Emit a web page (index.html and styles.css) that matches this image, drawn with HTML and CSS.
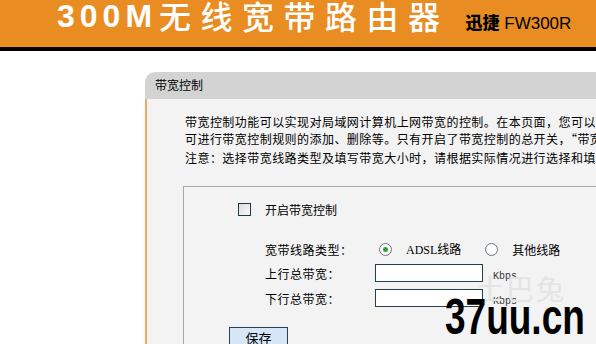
FILE: index.html
```html
<!DOCTYPE html>
<html lang="zh-CN">
<head>
    <meta charset="UTF-8">
    <title>带宽控制</title>
    <link rel="stylesheet" href="styles.css">
</head>
<body>
    <div class="banner">
        <h1 class="product"><span class="num">300M</span><span class="cn">无线宽带路由器</span></h1>
        <div class="model"><b>迅捷</b> FW300R</div>
    </div>

    <div class="main">
        <div class="panel">
            <div class="panel-title">带宽控制</div>
            <div class="panel-body">
                <div class="intro">
                    <p>带宽控制功能可以实现对局域网计算机上网带宽的控制。在本页面，您可以开启或关闭带宽控制功能，</p>
                    <p>可进行带宽控制规则的添加、删除等。只有开启了带宽控制的总开关，“带宽控制规则”才能生效。</p>
                    <p class="note">注意：选择带宽线路类型及填写带宽大小时，请根据实际情况进行选择和填写。</p>
                </div>

                <div class="settings">
                    <div class="switch-row">
                        <span class="check"></span>
                        <span>开启带宽控制</span>
                    </div>
                    <div class="form">
                        <span class="label">宽带线路类型：</span>
                        <div class="radios">
                            <span class="radio on"></span><span class="opt"><span class="latin">ADSL</span>线路</span>
                            <span class="radio"></span><span class="opt">其他线路</span>
                        </div>
                        <span class="label">上行总带宽：</span>
                        <div class="field"><span class="input"></span><span class="unit">Kbps</span></div>
                        <span class="label">下行总带宽：</span>
                        <div class="field"><span class="input"></span><span class="unit">Kbps</span></div>
                    </div>
                    <button class="save">保存</button>
                </div>
            </div>
        </div>
    </div>

    <div class="mark">
        <span class="mark-faint">土巴兔</span>
        <span class="mark-site">37uu.cn</span>
    </div>
</body>
</html>
```

FILE: styles.css
```css
body {
    margin: 0;
    width: 596px;
    height: 344px;
    overflow: hidden;
    background: #fff;
    font-family: "Noto Sans CJK SC", sans-serif;
    font-size: 12px;
    color: #000;
    position: relative;
}
.banner {
    height: 47px;
    background: #e98c22;
    border-bottom: 4px solid #000;
    display: flex;
    align-items: flex-start;
    padding-left: 57px;
    overflow: hidden;
}
.product {
    margin: 0;
    height: 32px;
    color: #fff;
    font-weight: bold;
    display: flex;
    align-items: center;
    white-space: nowrap;
}
.product .num {
    font-family: "Liberation Sans", sans-serif;
    font-size: 32px;
    line-height: 32px;
    letter-spacing: 5px;
}
.product .cn {
    margin-left: 2px;
    font-family: "Noto Sans CJK SC", sans-serif;
    font-size: 32px;
    line-height: 32px;
    font-weight: 500;
    letter-spacing: 9.5px;
    margin-top: -2px;
}
.model {
    margin: 11px 0 0 16px;
    font-family: "Liberation Sans", "Noto Sans CJK SC", sans-serif;
    font-size: 17px;
    line-height: 22px;
    white-space: nowrap;
}
.model b {
    font-family: "Noto Sans CJK SC", sans-serif;
    font-weight: 900;
}
.main {
    padding: 21px 0 0 145px;
}
.panel {
    width: 700px;
}
.panel-title {
    height: 27px;
    line-height: 26px;
    background: #d3d3d3;
    border-top-left-radius: 10px;
    padding-left: 10px;
}
.panel-body {
    background: #f3f3f3;
    border-left: 2px solid #f0a860;
    padding: 14px 0 0 36px;
    height: 300px;
}
.intro {
    padding-left: 2px;
    white-space: nowrap;
    letter-spacing: 0.45px;
}
.intro p {
    margin: 0;
    line-height: 17px;
}
.intro .note {
    margin-top: 2px;
}
.settings {
    margin-top: 20px;
    border-top: 1px solid #a8a8a8;
    border-left: 1px solid #a8a8a8;
    padding: 15px 0 0 45px;
}
.switch-row {
    display: flex;
    align-items: center;
    gap: 14px;
    padding-left: 9px;
    height: 15px;
}
.check {
    width: 11px;
    height: 11px;
    border: 1px solid #1c3a4a;
    background: linear-gradient(135deg, #dcdcdc, #fafafa);
}
.form {
    display: grid;
    grid-template-columns: 110px auto;
    grid-template-rows: 22px 26px 24px;
    align-items: center;
    margin: 21px 0 0 36px;
}
.label {
    letter-spacing: 0.5px;
}
.radios {
    display: flex;
    align-items: center;
    padding-left: 4px;
}
.radio {
    width: 11px;
    height: 11px;
    border: 1px solid #6c7a80;
    border-radius: 50%;
    background: radial-gradient(circle, #fff 50%, #e4e4e4);
    position: relative;
}
.radio.on::after {
    content: "";
    position: absolute;
    left: 3px;
    top: 3px;
    width: 5px;
    height: 5px;
    border-radius: 50%;
    background: #2e9e3a;
}
.opt {
    margin: 0 24px 0 14px;
}
.latin {
    font-family: "Liberation Serif", serif;
    font-size: 12px;
}
.field {
    display: flex;
    align-items: center;
}
.input {
    width: 106px;
    height: 16px;
    background: #fff;
    border: 1px solid #24404a;
}
.unit {
    margin-left: 10px;
    margin-top: 6px;
    font-family: "Liberation Mono", monospace;
    font-size: 10px;
    color: #333;
}
.save {
    display: block;
    margin: 17px 0 0 0;
    width: 59px;
    height: 22px;
    padding: 0;
    background: #d7e6f6;
    border: 1px solid #2b3e57;
    font-family: "Noto Sans CJK SC", sans-serif;
    font-size: 13px;
    line-height: 18px;
}
.mark {
    position: absolute;
    left: 440px;
    top: 268px;
    width: 156px;
    height: 76px;
}
.mark-faint {
    position: absolute;
    left: 36px;
    top: 0;
    font-size: 28px;
    color: #e4e4e4;
    letter-spacing: 2px;
}
.mark-site {
    position: absolute;
    left: 5px;
    top: 24px;
    font-family: "Liberation Sans", sans-serif;
    font-weight: bold;
    font-size: 50px;
    line-height: 1;
    color: #000;
    transform: scaleX(0.74);
    transform-origin: left top;
}
```
